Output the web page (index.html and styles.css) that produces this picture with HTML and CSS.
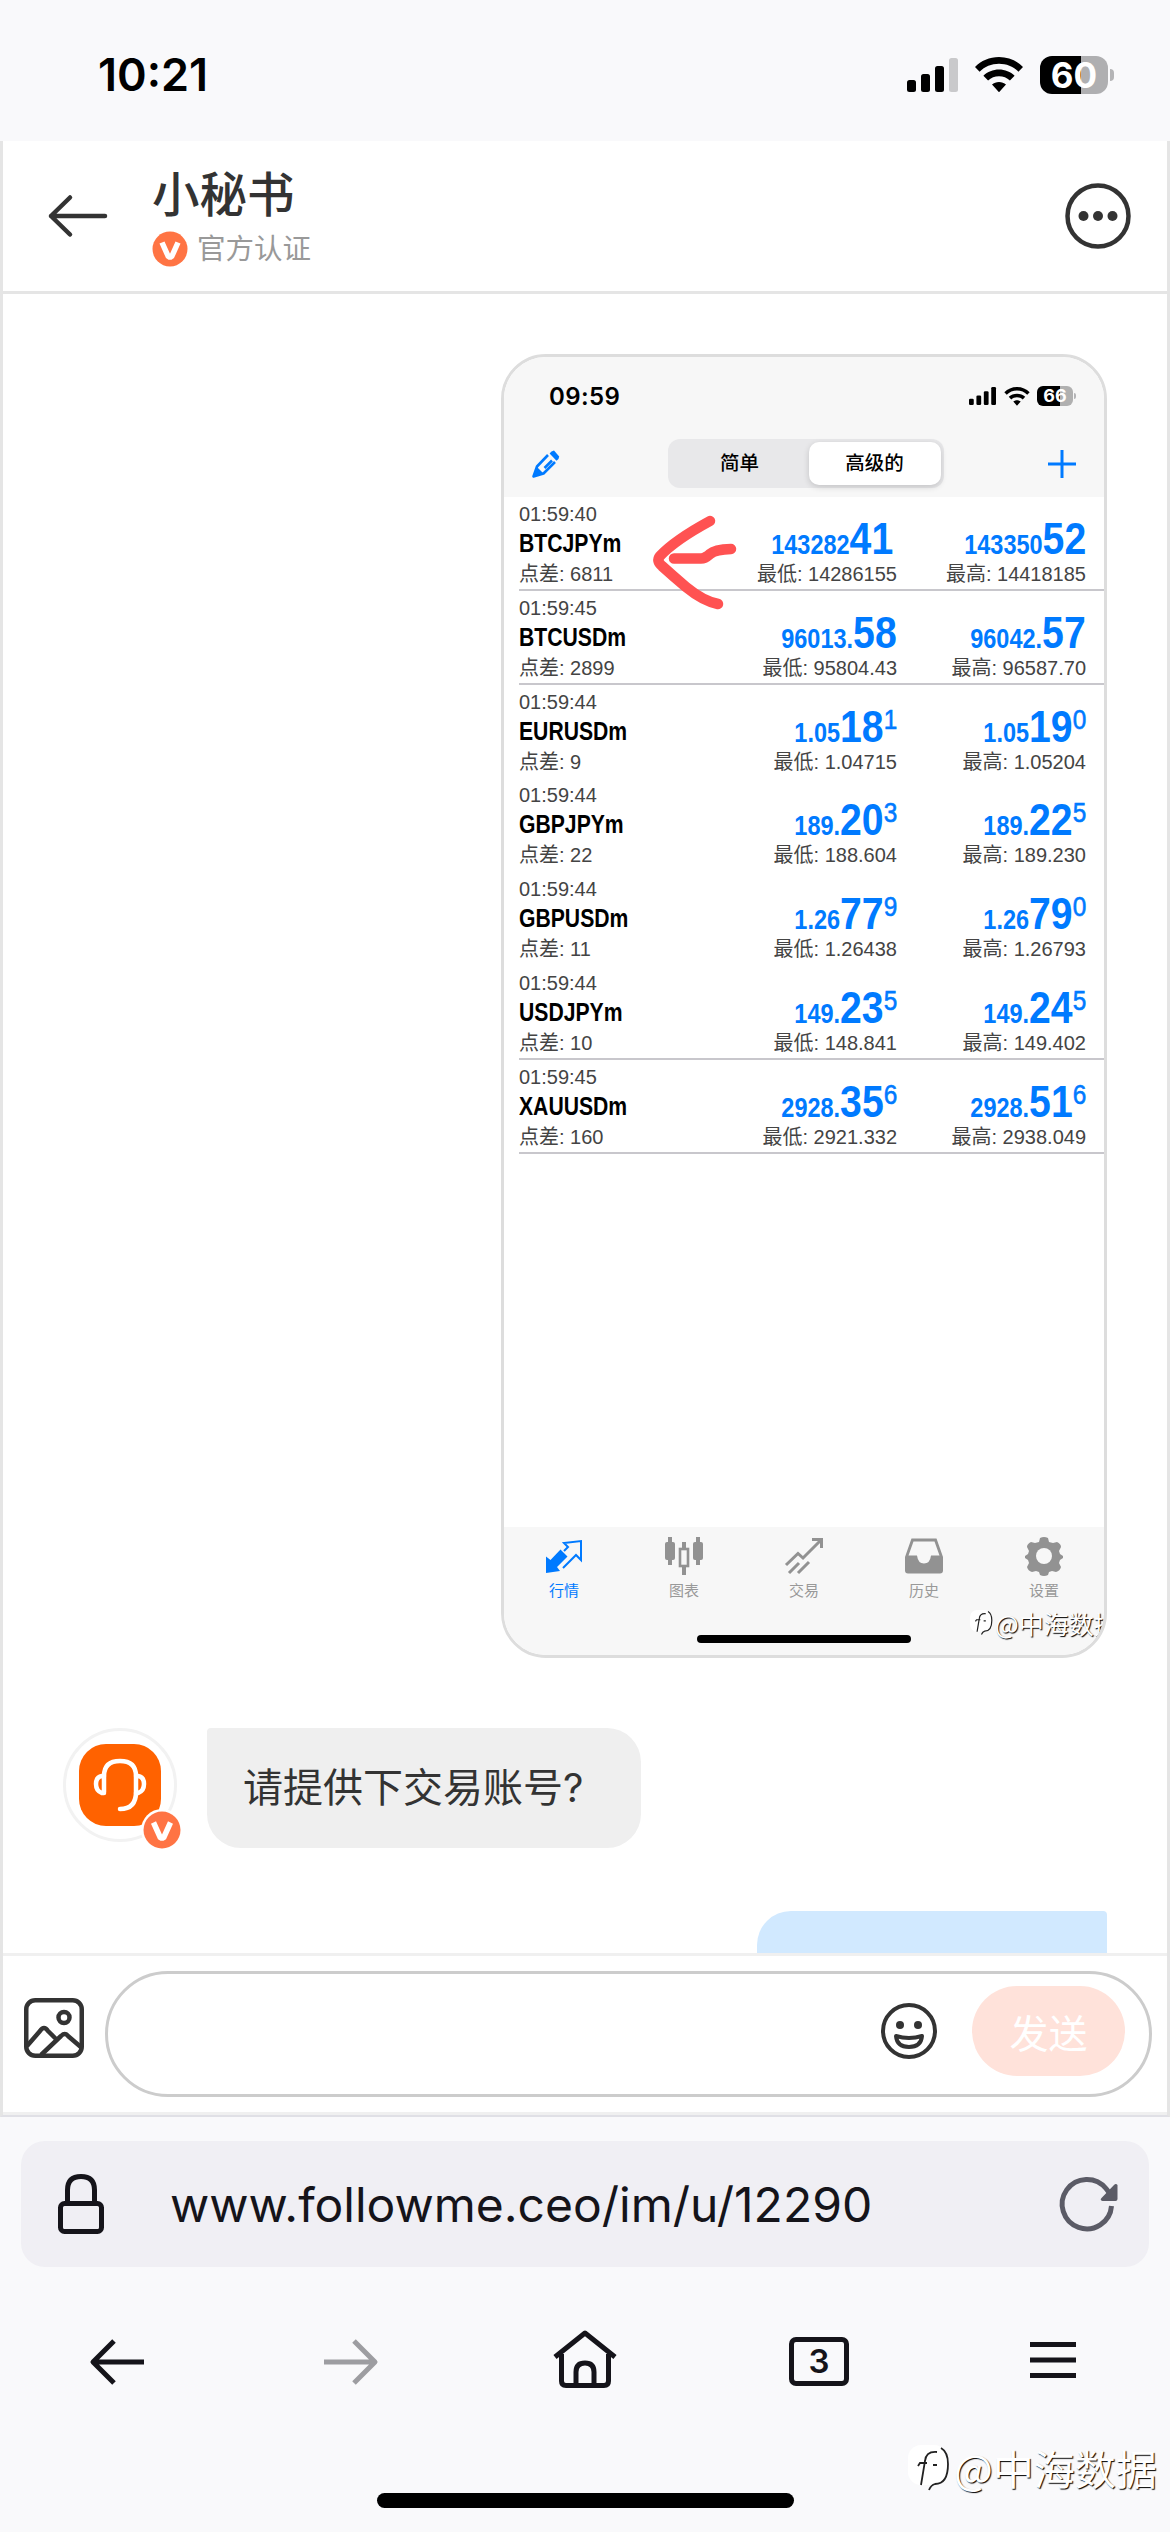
FILE: index.html
```html
<!DOCTYPE html>
<html lang="zh-CN">
<head>
<meta charset="utf-8">
<title>小秘书</title>
<link rel="stylesheet" href="styles.css">
</head>
<body>
<div class="screen">
  <div class="status">
    <span class="clock">10:21</span>
    <div class="status-icons">
      <svg class="signal" viewBox="0 0 51 34"><rect x="0" y="22" width="9" height="12" rx="2.5"/><rect x="14" y="16" width="9" height="18" rx="2.5"/><rect x="28" y="8" width="9" height="26" rx="2.5"/><rect x="42" y="0" width="9" height="34" rx="2.5" fill="#c9c9cb"/></svg>
      <svg class="wifi" viewBox="0 0 48 36"><path d="M24 0C14.500 0 6 3.700 0 10l4.600 4.700C9.600 9.700 16.500 6.800 24 6.800s14.400 2.900 19.400 7.900L48 10C42 3.700 33.500 0 24 0zM24 12.600c-6 0-11.500 2.300-15.600 6.100l4.700 4.800C16 20.800 19.800 19.300 24 19.300s8 1.500 10.900 4.200l4.700-4.800C35.500 14.900 30 12.600 24 12.600zM24 24.900c-2.700 0-5.200 1-7 2.700l7 7.700 7-7.700c-1.800-1.700-4.300-2.700-7-2.700z"/></svg>
      <div class="battery"><span>60</span></div>
    </div>
  </div>

  <div class="page">
    <header class="chat-head">
      <svg class="back" viewBox="0 0 60 44" fill="none" stroke="#333" stroke-width="4.500" stroke-linecap="round" stroke-linejoin="round"><path d="M57 22H3M22 3.500 3 22l19 18.500"/></svg>
      <div class="who">
        <h1>小秘书</h1>
        <div class="cert">
          <svg class="vbadge" viewBox="0 0 36 36"><circle cx="18" cy="18" r="17.500" fill="#ff7444"/><path d="M10 11.500 16.500 26h3L26 11.500" fill="none" stroke="#fff" stroke-width="5.500" stroke-linejoin="bevel"/></svg>
          <span>官方认证</span>
        </div>
      </div>
      <svg class="more" viewBox="0 0 66 66"><circle cx="33" cy="33" r="30.500" fill="none" stroke="#333" stroke-width="4.500"/><g fill="#333"><circle cx="18.500" cy="33" r="5"/><circle cx="33" cy="33" r="5"/><circle cx="47.500" cy="33" r="5"/></g></svg>
    </header>

    <main class="thread">
      <div class="shot">
        <div class="shot-top">
          <div class="shot-status">
            <span class="shot-clock">09:59</span>
            <div class="shot-icons">
              <svg class="signal-s" viewBox="0 0 51 34"><rect x="0" y="22" width="9" height="12" rx="2.500"/><rect x="14" y="16" width="9" height="18" rx="2.500"/><rect x="28" y="8" width="9" height="26" rx="2.500"/><rect x="42" y="0" width="9" height="34" rx="2.500"/></svg>
              <svg class="wifi-s" viewBox="0 0 48 36"><path d="M24 0C14.500 0 6 3.700 0 10l4.600 4.700C9.600 9.700 16.500 6.800 24 6.800s14.400 2.900 19.400 7.900L48 10C42 3.700 33.500 0 24 0zM24 12.600c-6 0-11.500 2.300-15.600 6.100l4.700 4.800C16 20.800 19.800 19.300 24 19.300s8 1.500 10.900 4.200l4.700-4.800C35.500 14.900 30 12.600 24 12.600zM24 24.900c-2.700 0-5.200 1-7 2.700l7 7.700 7-7.700c-1.800-1.700-4.300-2.700-7-2.700z"/></svg>
              <div class="battery battery-s"><span>66</span></div>
            </div>
          </div>
          <div class="shot-nav">
            <svg class="pencil" viewBox="0 0 28 28" fill="#007aff"><path d="M19.500 1.500 22 .6l5.200 5.800L26.500 9l-2 1.800L17.600 3.600z"/><path d="M16 5 5 16.500 1.500 26.500 11.500 23.500 23 12M12.500 18 20 10.500" fill="none" stroke="#007aff" stroke-width="2.600" stroke-linejoin="round"/><path d="m5 17 6 6-9.500 3.500z"/></svg>
            <div class="segment"><span>简单</span><span class="on">高级的</span></div>
            <svg class="plus" viewBox="0 0 28 28"><path d="M14 0v28M0 14h28" stroke="#007aff" stroke-width="3"/></svg>
          </div>
        </div>

        <div class="quotes">
          <div class="quote ruled">
            <div class="sym"><small>01:59:40</small><b>BTCJPYm</b><small>点差: 6811</small></div>
            <div class="px"><p class="hang">143282<i>41</i></p><small>最低: 14286155</small></div>
            <div class="px"><p>143350<i>52</i></p><small>最高: 14418185</small></div>
          </div>
          <div class="quote ruled">
            <div class="sym"><small>01:59:45</small><b>BTCUSDm</b><small>点差: 2899</small></div>
            <div class="px"><p>96013.<i>58</i></p><small>最低: 95804.43</small></div>
            <div class="px"><p>96042.<i>57</i></p><small>最高: 96587.70</small></div>
          </div>
          <div class="quote">
            <div class="sym"><small>01:59:44</small><b>EURUSDm</b><small>点差: 9</small></div>
            <div class="px"><p>1.05<i>18</i><u>1</u></p><small>最低: 1.04715</small></div>
            <div class="px"><p>1.05<i>19</i><u>0</u></p><small>最高: 1.05204</small></div>
          </div>
          <div class="quote">
            <div class="sym"><small>01:59:44</small><b>GBPJPYm</b><small>点差: 22</small></div>
            <div class="px"><p>189.<i>20</i><u>3</u></p><small>最低: 188.604</small></div>
            <div class="px"><p>189.<i>22</i><u>5</u></p><small>最高: 189.230</small></div>
          </div>
          <div class="quote">
            <div class="sym"><small>01:59:44</small><b>GBPUSDm</b><small>点差: 11</small></div>
            <div class="px"><p>1.26<i>77</i><u>9</u></p><small>最低: 1.26438</small></div>
            <div class="px"><p>1.26<i>79</i><u>0</u></p><small>最高: 1.26793</small></div>
          </div>
          <div class="quote ruled">
            <div class="sym"><small>01:59:44</small><b>USDJPYm</b><small>点差: 10</small></div>
            <div class="px"><p>149.<i>23</i><u>5</u></p><small>最低: 148.841</small></div>
            <div class="px"><p>149.<i>24</i><u>5</u></p><small>最高: 149.402</small></div>
          </div>
          <div class="quote ruled">
            <div class="sym"><small>01:59:45</small><b>XAUUSDm</b><small>点差: 160</small></div>
            <div class="px"><p>2928.<i>35</i><u>6</u></p><small>最低: 2921.332</small></div>
            <div class="px"><p>2928.<i>51</i><u>6</u></p><small>最高: 2938.049</small></div>
          </div>
          <svg class="scribble" viewBox="0 0 90 96" fill="none" stroke="#ff5252" stroke-width="10.500" stroke-linecap="round" stroke-linejoin="round"><path d="M59 9Q24 28 9 44Q5 49 11 54Q22 64 35 75Q52 89 67 92"/><path d="M23 46.500H50Q54 46.500 59 42T80 37"/></svg>
        </div>

        <div class="shot-bottom">
          <div class="tabs">
            <div class="tab on"><svg viewBox="0 0 38 38"><path d="M1 19.500 5.500 23 15.500 12.500 22.500 19.500 12 30 15 34 1 36z" fill="#007aff"/><path d="M18 31 31 18l5 5V4L19 6l4 4-4 4" fill="none" stroke="#007aff" stroke-width="2"/></svg><span>行情</span></div>
            <div class="tab"><svg viewBox="0 0 38 38"><path d="M5 0v28M33 0v28M19 5v8M19 28v10" stroke="#929292" stroke-width="4"/><rect x="0" y="5" width="10" height="18" rx="2" fill="#929292"/><rect x="28" y="5" width="10" height="18" rx="2" fill="#929292"/><rect x="15" y="12" width="8" height="17" fill="none" stroke="#929292" stroke-width="2.600"/></svg><span>图表</span></div>
            <div class="tab"><svg viewBox="0 0 38 38" fill="none" stroke="#929292" stroke-width="3"><path d="M1 28 13 16.500l5 4.500L36 3M27 2.500h9.500V11M4 36 14 26M13 36 24 25"/></svg><span>交易</span></div>
            <div class="tab"><svg viewBox="0 0 38 38"><path fill-rule="evenodd" d="M6.500 1.500h25L38 20v13.500q0 3-3 3H3q-3 0-3-3V20zM8.500 4.500 3.500 18.500H12q1 8 7 8t7-8h8.500l-5-14z" fill="#929292"/></svg><span>历史</span></div>
            <div class="tab"><svg viewBox="0 0 38 38"><path d="M15 1q4-2 8 0l1 4 4 1 4-1q4 2 4 5l-2 4 1 3 3 2v2l-3 2-1 3 2 4q-1 4-5 5l-4-1-3 1-1 3q-4 2-8 0l-1-3-3-1-4 1q-4-1-5-5l2-4-1-3-3-2v-2l3-2 1-3-2-4q0-3 4-5l4 1 4-1z" fill="#929292"/><circle cx="19" cy="19" r="8" fill="#f7f7f7"/></svg><span>设置</span></div>
          </div>
          <div class="shot-home"></div>
        </div>
        <div class="mark mark-s"><svg viewBox="0 0 44 50"><rect x="0" y="1" width="39" height="40" rx="13" fill="#fff"/><path d="M33 4q7 4 7 16 0 20-13 20-4 1-6 6M29 8q-11-1-12 9l-4 24M10 22l2-3h7M25 21h4" fill="none" stroke="#222" stroke-width="2.200"/></svg><span>@中海数据</span></div>
      </div>

      <div class="incoming">
        <div class="avatar">
          <svg class="face" viewBox="0 0 82 82"><rect width="82" height="82" rx="27" fill="#ff6200"/><g fill="none" stroke="#fff" stroke-width="4.500" stroke-linecap="round" stroke-linejoin="round"><path d="M25 48V32Q25 17 41 17T57 32V48Q57 65 41 65"/><path d="M25 32h-2q-6 1-6 8t6 9h2M57 32h2q6 1 6 8t-6 9h-2"/></g></svg>
          <svg class="vcorner" viewBox="0 0 42 42"><circle cx="21" cy="21" r="21" fill="#fff"/><circle cx="21" cy="21" r="18.500" fill="#ff7444"/><path d="M12.500 13.500 19.500 29h3l7-15.500" fill="none" stroke="#fff" stroke-width="5.500" stroke-linejoin="bevel"/></svg>
        </div>
        <div class="bubble">请提供下交易账号?</div>
      </div>
      <div class="bubble-out"></div>
    </main>

    <footer class="composer">
      <svg class="pic" viewBox="0 0 60 60" fill="none" stroke="#333" stroke-width="4.500" stroke-linejoin="round"><rect x="2.250" y="2.250" width="55.500" height="55.500" rx="9"/><circle cx="40" cy="19.500" r="5.500"/><path d="M3 48 16 33q4-6 8 0l8 8M17 57 37 38q4-4 7 0l14 12"/></svg>
      <div class="field">
        <svg class="smile" viewBox="0 0 56 56"><circle cx="28" cy="28" r="26" fill="none" stroke="#333" stroke-width="4"/><circle cx="19" cy="22" r="4" fill="#333"/><circle cx="37" cy="22" r="4" fill="#333"/><path d="M15 33q13 4 26 0-1 11-13 11T15 33z" fill="none" stroke="#333" stroke-width="4" stroke-linejoin="round"/></svg>
        <button class="send">发送</button>
      </div>
    </footer>
  </div>

  <div class="browser">
    <div class="url">
      <svg class="lock" viewBox="0 0 46 60" fill="none" stroke="#15141a" stroke-width="5"><rect x="2.500" y="29.500" width="41" height="28" rx="4"/><path d="M9.500 29V16Q9.500 2.500 23 2.500T36.500 16v13"/></svg>
      <span>www.followme.ceo/im/u/12290</span>
      <svg class="reload" viewBox="0 0 58 54"><path d="M51.500 29A24.700 24.700 0 1 1 46 11.500L51 18" fill="none" stroke="#5b5b66" stroke-width="5"/><path d="M57.500 8v14q0 2-2 2h-13q-3-1-1-3L54 8q2-2 3.500 0z" fill="#5b5b66"/></svg>
    </div>
    <nav class="nav">
      <div><svg class="arrow" viewBox="0 0 54 46" fill="none" stroke="#15141a" stroke-width="5" stroke-linejoin="round"><path d="M54 23H3M24 2 3 23l21 21"/></svg></div>
      <div><svg class="arrow" viewBox="0 0 54 46" fill="none" stroke="#9d9da1" stroke-width="5" stroke-linejoin="round"><path d="M0 23h51M30 2l21 21-21 21"/></svg></div>
      <div><svg class="home" viewBox="0 0 64 58" fill="none" stroke="#15141a" stroke-width="5" stroke-linejoin="round"><path d="M2 27 32 3l30 24M8.500 24v27q0 4.500 4.500 4.500h38q4.500 0 4.500-4.500V24M23 55V42q0-9 9-9t9 9v13"/></svg></div>
      <div><span class="count">3</span></div>
      <div><svg class="menu" viewBox="0 0 46 36"><path d="M0 2.500h46M0 18h46M0 33.500h46" stroke="#15141a" stroke-width="5"/></svg></div>
    </nav>
    <div class="home-bar"></div>
  </div>
  <div class="mark mark-l"><svg viewBox="0 0 44 50"><rect x="0" y="1" width="39" height="40" rx="13" fill="#fff"/><path d="M33 4q7 4 7 16 0 20-13 20-4 1-6 6M29 8q-11-1-12 9l-4 24M10 22l2-3h7M25 21h4" fill="none" stroke="#222" stroke-width="1.800"/></svg><span>@中海数据</span></div>
</div>
</body>
</html>
```
FILE: styles.css
```css
* { box-sizing: border-box; margin: 0; padding: 0; }
body { width: 1170px; height: 2532px; background: #f9f9fb; font-family: Inter, "Noto Sans CJK SC", sans-serif; color: #333; }
svg { display: block; flex: none; overflow: visible; }
.screen { position: relative; width: 1170px; height: 2532px; display: flex; flex-direction: column; overflow: hidden; }

.status { height: 141px; padding: 8px 56px 0 98px; display: flex; justify-content: space-between; align-items: center; }
.clock { font-size: 45px; font-weight: 600; color: #000; }
.status-icons { display: flex; align-items: center; }
.signal { width: 51px; height: 34px; margin-right: 17px; }
.wifi { width: 48px; height: 36px; margin-right: 17px; }
.battery { position: relative; width: 68px; height: 38px; border-radius: 12px; margin-right: 6px; background: linear-gradient(90deg, #000 60%, #afafb1 60%); color: #fff; font-size: 35px; font-weight: 700; line-height: 38px; text-align: center; }
.battery::after { content: ""; position: absolute; right: -6px; top: 13px; width: 4px; height: 12px; border-radius: 0 4px 4px 0; background: #b4b4b6; }

.page { height: 1976px; background: #fff; border: solid #e5e5e5; border-width: 0 3px; border-bottom: 2px solid #e0e0e6; display: flex; flex-direction: column; }
.chat-head { height: 153px; flex: none; border-bottom: 3px solid #e5e5e5; display: flex; align-items: center; padding: 0 36px 0 45px; }
.back { width: 60px; height: 44px; }
.who { margin-left: 44px; flex: 1; }
.who h1 { font-size: 47.500px; line-height: 58px; font-weight: 500; color: #333; }
.cert { display: flex; align-items: center; gap: 9px; height: 36px; margin-top: 7px; font-size: 28.500px; color: #999; }
.cert span { line-height: 36px; }
.vbadge { width: 36px; height: 36px; }
.more { width: 66px; height: 66px; }

.thread { height: 1659px; flex: none; overflow: hidden; padding: 60px 60px 0; display: flex; flex-direction: column; }
.shot { position: relative; align-self: flex-end; flex: none; width: 606px; height: 1304px; border: 3px solid #ddd; border-radius: 45px; overflow: hidden; display: flex; flex-direction: column; background: #fff; }
.shot-top { height: 140px; background: #f7f7f7; }
.shot-status { height: 76px; padding: 2px 27px 0 45px; display: flex; justify-content: space-between; align-items: center; }
.shot-clock { font-size: 24px; font-weight: 600; color: #000; letter-spacing: .4px; }
.shot-icons { display: flex; align-items: center; }
.signal-s { width: 27px; height: 18px; margin-right: 8px; }
.wifi-s { width: 26px; height: 19px; margin-right: 7px; }
.battery-s { width: 36px; height: 20px; border-radius: 6px; margin-right: 4px; font-size: 18px; line-height: 20px; background: linear-gradient(90deg, #000 65%, #b0b0b0 65%); }
.battery-s::after { right: -3px; top: 7px; width: 2px; height: 6px; }
.shot-nav { display: flex; align-items: center; justify-content: space-between; padding: 6px 28px 0 28px; }
.pencil, .plus { width: 28px; height: 28px; }
.segment { width: 276px; height: 49px; margin-left: 3px; border-radius: 12px; background: #e8e8ea; padding: 3px; display: grid; grid-template-columns: 1fr 132px; text-align: center; font-size: 19.500px; font-weight: 500; color: #000; line-height: 43px; }
.segment .on { background: #fff; border-radius: 10px; box-shadow: 0 2px 6px rgba(0,0,0,.16); }

.quotes { position: relative; height: 1030px; flex: none; }
.quote { height: 93.800px; margin-left: 15px; padding-right: 18px; display: grid; grid-template-columns: 188px 190px 189px; font-family: "Liberation Sans", "Noto Sans CJK SC", sans-serif; }
.ruled { border-bottom: 2px solid #c8c7cc; }
.quote small { display: block; font-size: 20px; line-height: 24px; color: #444; white-space: nowrap; }
.sym { padding-top: 5px; }
.sym b { display: block; width: max-content; font-size: 25.500px; line-height: 34px; height: 36px; color: #000; transform: scaleX(.83); transform-origin: left; }
.px { padding-top: 19px; text-align: right; }
.px p { float: right; height: 46px; line-height: 46px; font-size: 27px; font-weight: 700; color: #007aff; transform: scaleX(.87); transform-origin: right; white-space: nowrap; }
.px p.hang { margin-right: 4px; }
.px small { clear: both; }
.px i { font-size: 45px; font-style: normal; line-height: 1; }
.px u { font-size: 28px; font-weight: 400; text-decoration: none; vertical-align: 13px; line-height: 1; -webkit-text-stroke: .6px #007aff; }
.scribble { position: absolute; left: 147px; top: 15px; width: 90px; height: 96px; }

.shot-bottom { flex: 1; background: #f7f7f7; display: flex; flex-direction: column; align-items: center; justify-content: space-between; padding: 10px 0 12px; }
.tabs { width: 600px; display: grid; grid-template-columns: repeat(5, 120px); }
.tab { display: flex; flex-direction: column; align-items: center; gap: 6px; font-size: 15px; line-height: 20px; color: #999; }
.tab svg { width: 38px; height: 38px; }
.tab.on { color: #007aff; }
.shot-home { width: 214px; height: 8px; border-radius: 4px; background: #000; }

.mark { position: absolute; display: flex; align-items: center; color: #fff; text-shadow: 1px 1px 1px #000; white-space: nowrap; font-family: "Noto Sans CJK SC", sans-serif; }
.mark-s { left: 466px; top: 1250px; font-size: 25px; line-height: 32px; gap: 1px; }
.mark-s svg { width: 24px; height: 28px; }
.mark-l { left: 908px; top: 2440px; font-size: 41px; line-height: 52px; gap: 2px; }
.mark-l svg { width: 44px; height: 50px; margin-top: 4px; }

.incoming { flex: none; display: flex; margin-top: 70px; gap: 30px; }
.avatar { position: relative; width: 114px; height: 114px; border: 3px solid #f2f2f2; border-radius: 50%; padding: 13px; }
.face { width: 82px; height: 82px; }
.vcorner { position: absolute; left: 75px; top: 78px; width: 42px; height: 42px; }
.bubble { width: 434px; height: 120px; border-radius: 4px 34px 34px 34px; background: #efefef; padding-left: 36px; font-size: 40px; line-height: 120px; color: #333; white-space: nowrap; }
.bubble-out { align-self: flex-end; flex: none; width: 350px; height: 120px; margin-top: 63px; border-radius: 34px 4px 34px 34px; background: #d1e9ff; }

.composer { flex: 1; border: solid #f0f0f0; border-width: 3px 0; display: flex; align-items: center; padding: 0 15px 0 21px; }
.pic { width: 60px; height: 60px; margin-top: -12px; }
.field { flex: 1; margin-left: 21px; height: 126px; border: 3px solid #ccc; border-radius: 63px; display: flex; justify-content: flex-end; align-items: center; gap: 35px; padding: 0 24px 6px 0; }
.smile { width: 56px; height: 56px; }
.send { width: 153px; height: 90px; border: 0; border-radius: 45px; background: #ffe2da; color: #fff; font: 400 39px Inter, "Noto Sans CJK SC", sans-serif; }

.browser { flex: 1; display: flex; flex-direction: column; align-items: center; padding-top: 24px; }
.url { width: 1128px; height: 126px; border-radius: 24px; background: #f0eff4; display: flex; align-items: center; padding: 0 31px 0 37px; }
.lock { width: 46px; height: 60px; }
.url span { flex: 1; margin-left: 66px; font-size: 48px; color: #15141a; white-space: nowrap; }
.reload { width: 58px; height: 54px; }
.nav { width: 1170px; height: 190px; display: grid; grid-template-columns: repeat(5, 234px); }
.nav div { display: flex; align-items: center; justify-content: center; }
.arrow { width: 54px; height: 46px; }
.home { width: 64px; height: 58px; margin-top: -6px; }
.count { width: 60px; height: 49px; border: 5px solid #15141a; border-radius: 7px; font-size: 33px; font-weight: 600; line-height: 39px; text-align: center; color: #15141a; margin-top: -2px; }
.menu { width: 46px; height: 36px; margin-top: -5px; }
.home-bar { width: 417px; height: 15px; border-radius: 8px; margin-top: 36px; background: #000; }
```
